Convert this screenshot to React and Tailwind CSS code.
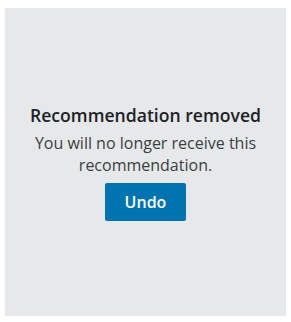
export default function App() {
  return (
    <div className="w-[291px] h-[322px] bg-white pt-[8px] pl-[5px]" style={{ fontFamily: '"Open Sans", "Noto Sans", sans-serif' }}>
      <div className="w-[281px] h-[308px] bg-[#e6e8ea] flex flex-col items-center justify-center text-center">
        <h2 className="text-[17.6px] leading-[24px] font-semibold text-[#1d2226]">Recommendation removed</h2>
        <p className="mt-[5px] px-[20px] text-[16px] leading-[22px] text-[#3a3f43]">
          You will no longer receive this recommendation.
        </p>
        <button className="mt-[7px] w-[81px] h-[38px] rounded-[2px] bg-[#0073b1] text-white text-[16px] font-semibold">
          Undo
        </button>
      </div>
    </div>
  );
}
